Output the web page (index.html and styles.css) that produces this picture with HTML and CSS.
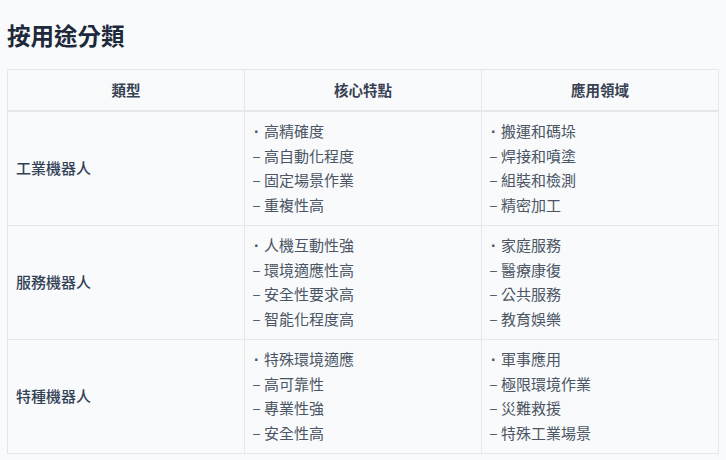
FILE: index.html
```html
<!DOCTYPE html>
<html lang="zh-Hant">
<head>
<meta charset="utf-8">
<link rel="stylesheet" href="styles.css">
</head>
<body>
<h2 class="title">按用途分類</h2>
<table class="cls">
  <thead>
    <tr><th>類型</th><th>核心特點</th><th>應用領域</th></tr>
  </thead>
  <tbody>
    <tr>
      <td class="label">工業機器人</td>
      <td><div class="ln"><span class="mk dot">·</span>高精確度</div><div class="ln"><span class="mk">–</span>高自動化程度</div><div class="ln"><span class="mk">–</span>固定場景作業</div><div class="ln"><span class="mk">–</span>重複性高</div></td>
      <td><div class="ln"><span class="mk dot">·</span>搬運和碼垛</div><div class="ln"><span class="mk">–</span>焊接和噴塗</div><div class="ln"><span class="mk">–</span>組裝和檢測</div><div class="ln"><span class="mk">–</span>精密加工</div></td>
    </tr>
    <tr>
      <td class="label">服務機器人</td>
      <td><div class="ln"><span class="mk dot">·</span>人機互動性強</div><div class="ln"><span class="mk">–</span>環境適應性高</div><div class="ln"><span class="mk">–</span>安全性要求高</div><div class="ln"><span class="mk">–</span>智能化程度高</div></td>
      <td><div class="ln"><span class="mk dot">·</span>家庭服務</div><div class="ln"><span class="mk">–</span>醫療康復</div><div class="ln"><span class="mk">–</span>公共服務</div><div class="ln"><span class="mk">–</span>教育娛樂</div></td>
    </tr>
    <tr>
      <td class="label">特種機器人</td>
      <td><div class="ln"><span class="mk dot">·</span>特殊環境適應</div><div class="ln"><span class="mk">–</span>高可靠性</div><div class="ln"><span class="mk">–</span>專業性強</div><div class="ln"><span class="mk">–</span>安全性高</div></td>
      <td><div class="ln"><span class="mk dot">·</span>軍事應用</div><div class="ln"><span class="mk">–</span>極限環境作業</div><div class="ln"><span class="mk">–</span>災難救援</div><div class="ln"><span class="mk">–</span>特殊工業場景</div></td>
    </tr>
  </tbody>
</table>
</body>
</html>
```
FILE: styles.css
```css
html, body {
  background: #f8fafc;
}
body {
  margin: 0;
  padding: 0 7px;
  font-family: "Noto Sans CJK TC", "Noto Sans", sans-serif;
  color: #4b5563;
}
.title {
  margin: 0;
  padding-top: 19px;
  font-size: 23.5px;
  line-height: 32px;
  font-weight: 700;
  color: #1e293b;
  margin-bottom: 17.5px;
}
.cls {
  width: 712px;
  border-collapse: collapse;
  table-layout: fixed;
  background: #f8fafc;
  font-size: 15px;
}
.cls th, .cls td {
  border: 1px solid #e5e7eb;
}
.cls th {
  font-weight: 600;
  font-size: 14.5px;
  color: #374151;
  line-height: 22px;
  padding: 9px 8px;
  text-align: center;
  border-bottom: 2px solid #e5e7eb;
}
.cls td {
  padding: 7.5px 8px;
  line-height: 24.5px;
  vertical-align: middle;
  text-align: left;
}
.ln {
  height: 24.5px;
}
.cls td.label {
  font-weight: 500;
  color: #334155;
}
.mk {
  display: inline-block;
  width: 11px;
  font-family: "Liberation Sans", sans-serif;
  font-size: 12.5px;
  line-height: 1;
  vertical-align: 1px;
}
.mk.dot {
  font-size: 16px;
  font-weight: 700;
  padding-left: 1px;
  width: 10px;
  vertical-align: 0;
}
```
